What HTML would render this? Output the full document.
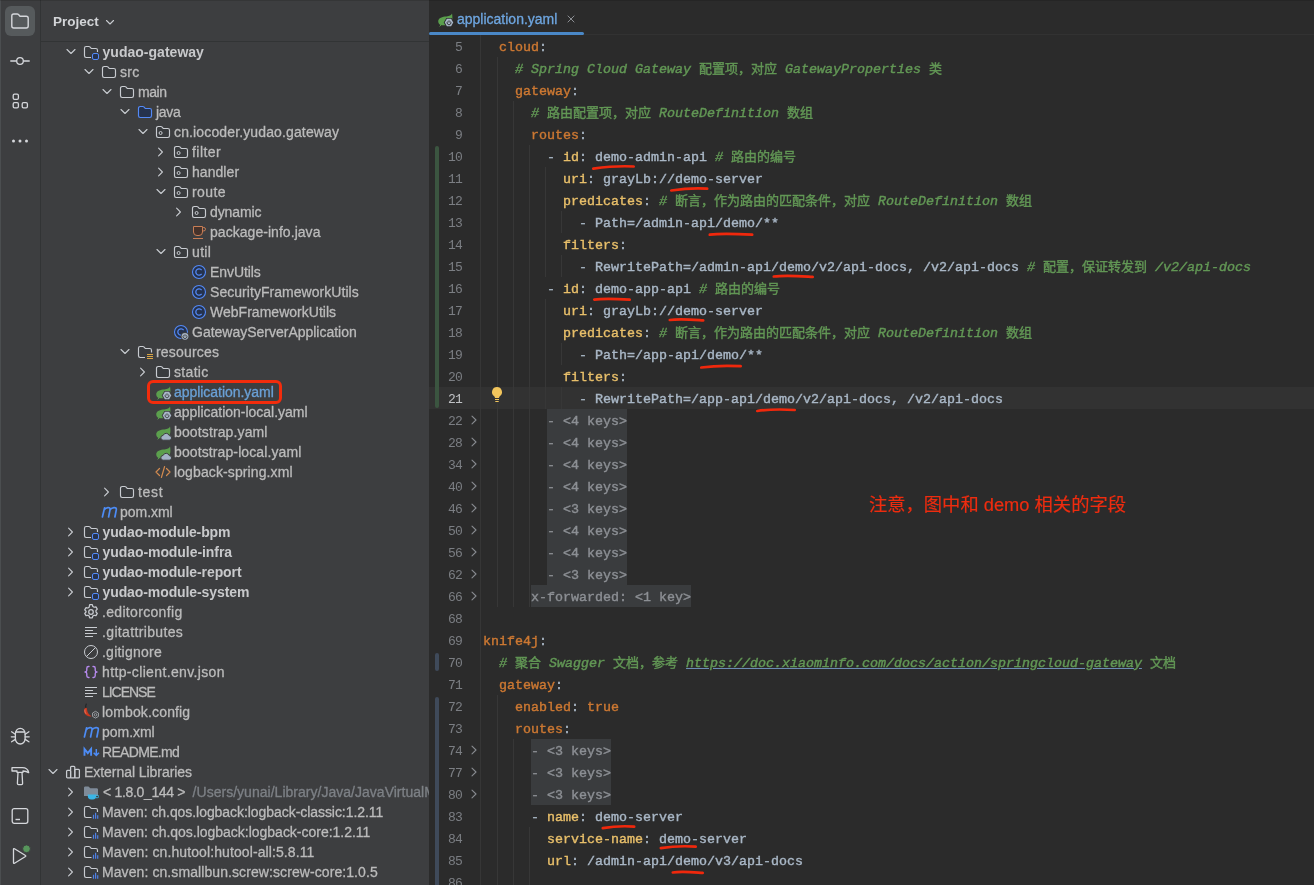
<!DOCTYPE html>
<html lang="zh"><head><meta charset="utf-8"><title>application.yaml</title>
<style>
*{box-sizing:border-box}
html,body{margin:0;padding:0;background:#2b2b2b;}
body{width:1314px;height:885px;overflow:hidden;position:relative;font-family:"Liberation Sans","Noto Sans CJK SC",sans-serif;}
.tb{position:absolute;left:0;top:0;width:41px;height:885px;background:#3d3e40;border-right:1px solid #323435;box-shadow:inset 1px 0 0 #4b4e50}
.tb svg{position:absolute}
.selbtn{position:absolute;left:5px;top:6px;width:30px;height:30px;border-radius:6px;background:#565a5c}
.proj{position:absolute;left:41px;top:0;width:388px;height:885px;background:#3d3e40;overflow:hidden}
.ph{position:absolute;left:0;top:0;width:388px;height:42px;border-bottom:1px solid #323435}
.ph b{position:absolute;left:12px;top:14px;font-size:13.500px;line-height:16px;color:#d3d5d8;font-weight:bold}
.tree{will-change:transform;position:absolute;left:-41px;top:0;width:470px;height:885px}
.row{position:absolute;left:0;height:20px;width:470px}
.row .a,.row .i{position:absolute;top:2px;width:16px;height:16px}
.row .a{top:1.500px}
.row svg{display:block}
.row .t{position:absolute;top:0;line-height:20px;font-size:14px;color:#bbbbbb;white-space:nowrap;-webkit-text-stroke:.3px}
.row .t.b{font-weight:bold;color:#c8c9cb;-webkit-text-stroke:0;margin-left:.5px}
.row .t.sel{color:#6aa0d6}
.row .g{color:#7d8186;white-space:pre}
.redbox{position:absolute;left:147px;top:380px;width:135px;height:24px;border:3px solid #f32c0c;border-radius:6px}
.sb1{position:absolute;left:428px;top:0;width:2px;height:885px;background:#343638}
.ed{will-change:transform;position:absolute;left:429px;top:0;width:885px;height:885px;background:#2b2b2b;overflow:hidden;font-family:"Liberation Mono","Noto Sans CJK SC",monospace}
.tabs{position:absolute;left:0;top:0;width:885px;height:35px;background:#2b2b2b;border-bottom:1px solid #323232}
.tab{position:absolute;left:0;top:0;width:155px;height:35px}
.tab:after{content:'';position:absolute;left:0;top:32px;width:155px;height:3px;border-radius:1.500px;background:#4a88c7}
.tab .nm{position:absolute;left:28px;top:9px;-webkit-text-stroke:.3px;font:14px/20px "Liberation Sans",sans-serif;color:#6ea6e0}
.ln{position:absolute;left:0;width:885px;height:22px;font-size:13.330px;line-height:22px;white-space:pre}
.curbg{position:absolute;left:0;top:387px;width:885px;height:22px;background:#323232}
.no{position:absolute;right:853px;top:1.500px;color:#7b7e83;font-size:13px;letter-spacing:-.9px;margin-right:-.9px}
.ln.cur .no{color:#c0c2c5}
.fa{position:absolute;left:40px;top:5px}
.code{position:absolute;top:1.500px;color:#a9b7c6;-webkit-text-stroke:.4px}
.k{color:#cc7832} .code .k{}
.yk{color:#e8bf6a}
.c{color:#629755;font-style:italic}
.u{color:#629755;font-style:italic;text-decoration:underline;text-decoration-color:#6c8cb5}
.p{color:#a9b7c6}
.f{color:#8c8f94}
.fb{position:absolute;top:0;height:22px;background:#3a3c3e}
.z{line-height:1px;font-size:13px;font-style:normal;font-family:"Noto Sans CJK SC",sans-serif}
.gd{position:absolute;width:1px;background:#373737}
.gutline{position:absolute;left:51px;top:35px;width:1px;height:850px;background:#363636}
.vcs{position:absolute;left:6px;width:4px;border-radius:2px}
.note{position:absolute;left:869px;top:493.500px;-webkit-text-stroke:.2px;font:18.300px/22px "Liberation Sans","Noto Sans CJK SC",sans-serif;color:#ee2c0f;white-space:nowrap}
</style></head><body>

<div class="tb">
 <div class="selbtn"></div>
 <svg style="left:10px;top:11px" width="20" height="20" viewBox="0 0 20 20" fill="none"><path d="M1.800 5c0-1.100.9-2 2-2h3.300c.5 0 1 .2 1.400.6L10 5.200h6.200c1.100 0 2 .9 2 2V15c0 1.100-.9 2-2 2H3.800c-1.100 0-2-.9-2-2z" stroke="#d5d7db" stroke-width="1.400"/></svg>
 <svg style="left:10px;top:51px" width="20" height="20" viewBox="0 0 20 20" fill="none"><circle cx="10" cy="10" r="3.300" stroke="#d5d7db" stroke-width="1.300"/><path d="M0.300 10H6.700M13.300 10h6.400" stroke="#d5d7db" stroke-width="1.300"/></svg>
 <svg style="left:10px;top:91px" width="20" height="20" viewBox="0 0 20 20" fill="none"><rect x="3.200" y="3.200" width="5.200" height="5.200" rx="1.300" stroke="#d5d7db" stroke-width="1.300"/><rect x="3.200" y="11.600" width="5.200" height="5.200" rx="1.300" stroke="#d5d7db" stroke-width="1.300"/><rect x="12.200" y="11.600" width="5.200" height="5.200" rx="1.300" stroke="#d5d7db" stroke-width="1.300"/></svg>
 <svg style="left:10px;top:131px" width="20" height="20" viewBox="0 0 20 20"><circle cx="3.500" cy="10" r="1.500" fill="#d5d7db"/><circle cx="10" cy="10" r="1.500" fill="#d5d7db"/><circle cx="16.500" cy="10" r="1.500" fill="#d5d7db"/></svg>

 <svg style="left:10px;top:726px" width="20" height="20" viewBox="0 0 20 20" fill="none"><path d="M5.400 7.600a4.850 5.200 0 0 1 9.700 0v5.200a4.850 5.200 0 0 1-9.700 0z" stroke="#d5d7db" stroke-width="1.300"/><path d="M6.200 6h8.100M5.300 8.200L1.600 5.800M15.200 8.200l3.700-2.400M5.300 10.800H1.300M15.200 10.800h4M5.300 13.400l-3.700 2.400M15.200 13.400l3.700 2.400" stroke="#d5d7db" stroke-width="1.300" stroke-linecap="round"/></svg>
 <svg style="left:10px;top:766px" width="20" height="20" viewBox="0 0 20 20" fill="none"><path d="M2 1.700h10.300c3.300 0 5.800 1.900 6.400 5-1.700-1.200-3.400-1.700-5.700-1.700v1.300H7V5H2z" stroke="#d5d7db" stroke-width="1.300" stroke-linejoin="round"/><path d="M8 6.300l-.6 11.200c0 .6.500 1.100 1.100 1.100h3c.6 0 1.100-.5 1.100-1.100L12 6.300" stroke="#d5d7db" stroke-width="1.300" stroke-linejoin="round"/></svg>
 <svg style="left:10px;top:806px" width="20" height="20" viewBox="0 0 20 20" fill="none"><rect x="2.200" y="2.700" width="15.600" height="14.600" rx="2" stroke="#d5d7db" stroke-width="1.300"/><path d="M5.500 13.500h4.500" stroke="#d5d7db" stroke-width="1.400"/></svg>
 <svg style="left:10px;top:845px" width="22" height="22" viewBox="0 0 22 22" fill="none"><path d="M3.500 4.200v13.600c0 .5.500.8 1 .5l11-6.800c.4-.3.400-.8 0-1L4.500 3.700c-.5-.3-1 0-1 .5z" stroke="#d5d7db" stroke-width="1.300" stroke-linejoin="round"/><circle cx="16.500" cy="3.800" r="3.900" fill="#57965c" stroke="#3d3e40" stroke-width="1"/></svg>
</div>
<div class="proj">
 <div class="tree">
<div class="row" style="top:42px"><span class="a" style="left:62.5px"><svg class="ch" width="16" height="16" viewBox="0 0 16 16" fill="none"><path d="M4 5.500L8 9.500l4-4" stroke="#c9ccd1" stroke-width="1.100" stroke-linecap="round" stroke-linejoin="round"/></svg></span><span class="i" style="left:83px"><svg class="ic" style="" width="16" height="16" viewBox="0 0 16 16" fill="none"><path d="M14.5 8V6.2c0-.94-.76-1.7-1.7-1.7H8.56c-.14 0-.26-.1-.36-.2L6.86 2.94A1.5 1.5 0 0 0 5.8 2.5H3.2c-.94 0-1.7.76-1.7 1.7v7.6c0 .94.76 1.7 1.7 1.7H8" fill="#393b3e" stroke="#c9ccd1" stroke-width="1.150"/><rect x="9.5" y="9.5" width="6" height="6" rx="1.5" fill="#25324d" stroke="#548af7"/></svg></span><span class="t b" id="t0" style="left:102px;letter-spacing:0.02px"><span class="m">yudao-gateway</span></span></div>
<div class="row" style="top:62px"><span class="a" style="left:80.5px"><svg class="ch" width="16" height="16" viewBox="0 0 16 16" fill="none"><path d="M4 5.500L8 9.500l4-4" stroke="#c9ccd1" stroke-width="1.100" stroke-linecap="round" stroke-linejoin="round"/></svg></span><span class="i" style="left:101px"><svg class="ic" style="" width="16" height="16" viewBox="0 0 16 16" fill="none"><path d="M1.5 4.2c0-.94.76-1.7 1.7-1.7h2.6c.4 0 .78.16 1.06.44L8.2 4.3c.1.1.22.2.36.2h4.24c.94 0 1.7.76 1.7 1.7v5.6c0 .94-.76 1.7-1.7 1.7H3.2c-.94 0-1.7-.76-1.7-1.7z" fill="#393b3e" stroke="#c9ccd1" stroke-width="1.150"/></svg></span><span class="t" id="t1" style="left:120px;letter-spacing:0.276px"><span class="m">src</span></span></div>
<div class="row" style="top:82px"><span class="a" style="left:98.5px"><svg class="ch" width="16" height="16" viewBox="0 0 16 16" fill="none"><path d="M4 5.500L8 9.500l4-4" stroke="#c9ccd1" stroke-width="1.100" stroke-linecap="round" stroke-linejoin="round"/></svg></span><span class="i" style="left:119px"><svg class="ic" style="" width="16" height="16" viewBox="0 0 16 16" fill="none"><path d="M1.5 4.2c0-.94.76-1.7 1.7-1.7h2.6c.4 0 .78.16 1.06.44L8.2 4.3c.1.1.22.2.36.2h4.24c.94 0 1.7.76 1.7 1.7v5.6c0 .94-.76 1.7-1.7 1.7H3.2c-.94 0-1.7-.76-1.7-1.7z" fill="#393b3e" stroke="#c9ccd1" stroke-width="1.150"/></svg></span><span class="t" id="t2" style="left:138px;letter-spacing:-0.44px"><span class="m">main</span></span></div>
<div class="row" style="top:102px"><span class="a" style="left:116.5px"><svg class="ch" width="16" height="16" viewBox="0 0 16 16" fill="none"><path d="M4 5.500L8 9.500l4-4" stroke="#c9ccd1" stroke-width="1.100" stroke-linecap="round" stroke-linejoin="round"/></svg></span><span class="i" style="left:137px"><svg class="ic" style="" width="16" height="16" viewBox="0 0 16 16" fill="none"><path d="M1.5 4.2c0-.94.76-1.7 1.7-1.7h2.6c.4 0 .78.16 1.06.44L8.2 4.3c.1.1.22.2.36.2h4.24c.94 0 1.7.76 1.7 1.7v5.6c0 .94-.76 1.7-1.7 1.7H3.2c-.94 0-1.7-.76-1.7-1.7z" fill="#25324d" stroke="#548af7" stroke-width="1.150"/></svg></span><span class="t" id="t3" style="left:156px;letter-spacing:-0.297px"><span class="m">java</span></span></div>
<div class="row" style="top:122px"><span class="a" style="left:134.5px"><svg class="ch" width="16" height="16" viewBox="0 0 16 16" fill="none"><path d="M4 5.500L8 9.500l4-4" stroke="#c9ccd1" stroke-width="1.100" stroke-linecap="round" stroke-linejoin="round"/></svg></span><span class="i" style="left:155px"><svg class="ic" style="" width="16" height="16" viewBox="0 0 16 16" fill="none"><path d="M1.5 4.2c0-.94.76-1.7 1.7-1.7h2.6c.4 0 .78.16 1.06.44L8.2 4.3c.1.1.22.2.36.2h4.24c.94 0 1.7.76 1.7 1.7v5.6c0 .94-.76 1.7-1.7 1.7H3.2c-.94 0-1.7-.76-1.7-1.7z" fill="#393b3e" stroke="#c9ccd1" stroke-width="1.150"/><circle cx="5.6" cy="9" r="1.5" stroke="#c9ccd1" stroke-width="1"/></svg></span><span class="t" id="t4" style="left:174px;letter-spacing:0.134px"><span class="m">cn.iocoder.yudao.gateway</span></span></div>
<div class="row" style="top:142px"><span class="a" style="left:152.5px"><svg class="ch" width="16" height="16" viewBox="0 0 16 16" fill="none"><path d="M5.600 4.200L9.400 8l-3.800 3.800" stroke="#c9ccd1" stroke-width="1.100" stroke-linecap="round" stroke-linejoin="round"/></svg></span><span class="i" style="left:173px"><svg class="ic" style="" width="16" height="16" viewBox="0 0 16 16" fill="none"><path d="M1.5 4.2c0-.94.76-1.7 1.7-1.7h2.6c.4 0 .78.16 1.06.44L8.2 4.3c.1.1.22.2.36.2h4.24c.94 0 1.7.76 1.7 1.7v5.6c0 .94-.76 1.7-1.7 1.7H3.2c-.94 0-1.7-.76-1.7-1.7z" fill="#393b3e" stroke="#c9ccd1" stroke-width="1.150"/><circle cx="5.6" cy="9" r="1.5" stroke="#c9ccd1" stroke-width="1"/></svg></span><span class="t" id="t5" style="left:192px;letter-spacing:0.458px"><span class="m">filter</span></span></div>
<div class="row" style="top:162px"><span class="a" style="left:152.5px"><svg class="ch" width="16" height="16" viewBox="0 0 16 16" fill="none"><path d="M5.600 4.200L9.400 8l-3.800 3.800" stroke="#c9ccd1" stroke-width="1.100" stroke-linecap="round" stroke-linejoin="round"/></svg></span><span class="i" style="left:173px"><svg class="ic" style="" width="16" height="16" viewBox="0 0 16 16" fill="none"><path d="M1.5 4.2c0-.94.76-1.7 1.7-1.7h2.6c.4 0 .78.16 1.06.44L8.2 4.3c.1.1.22.2.36.2h4.24c.94 0 1.7.76 1.7 1.7v5.6c0 .94-.76 1.7-1.7 1.7H3.2c-.94 0-1.7-.76-1.7-1.7z" fill="#393b3e" stroke="#c9ccd1" stroke-width="1.150"/><circle cx="5.6" cy="9" r="1.5" stroke="#c9ccd1" stroke-width="1"/></svg></span><span class="t" id="t6" style="left:192px;letter-spacing:0.057px"><span class="m">handler</span></span></div>
<div class="row" style="top:182px"><span class="a" style="left:152.5px"><svg class="ch" width="16" height="16" viewBox="0 0 16 16" fill="none"><path d="M4 5.500L8 9.500l4-4" stroke="#c9ccd1" stroke-width="1.100" stroke-linecap="round" stroke-linejoin="round"/></svg></span><span class="i" style="left:173px"><svg class="ic" style="" width="16" height="16" viewBox="0 0 16 16" fill="none"><path d="M1.5 4.2c0-.94.76-1.7 1.7-1.7h2.6c.4 0 .78.16 1.06.44L8.2 4.3c.1.1.22.2.36.2h4.24c.94 0 1.7.76 1.7 1.7v5.6c0 .94-.76 1.7-1.7 1.7H3.2c-.94 0-1.7-.76-1.7-1.7z" fill="#393b3e" stroke="#c9ccd1" stroke-width="1.150"/><circle cx="5.6" cy="9" r="1.5" stroke="#c9ccd1" stroke-width="1"/></svg></span><span class="t" id="t7" style="left:192px;letter-spacing:0.396px"><span class="m">route</span></span></div>
<div class="row" style="top:202px"><span class="a" style="left:170.5px"><svg class="ch" width="16" height="16" viewBox="0 0 16 16" fill="none"><path d="M5.600 4.200L9.400 8l-3.800 3.800" stroke="#c9ccd1" stroke-width="1.100" stroke-linecap="round" stroke-linejoin="round"/></svg></span><span class="i" style="left:191px"><svg class="ic" style="" width="16" height="16" viewBox="0 0 16 16" fill="none"><path d="M1.5 4.2c0-.94.76-1.7 1.7-1.7h2.6c.4 0 .78.16 1.06.44L8.2 4.3c.1.1.22.2.36.2h4.24c.94 0 1.7.76 1.7 1.7v5.6c0 .94-.76 1.7-1.7 1.7H3.2c-.94 0-1.7-.76-1.7-1.7z" fill="#393b3e" stroke="#c9ccd1" stroke-width="1.150"/><circle cx="5.6" cy="9" r="1.5" stroke="#c9ccd1" stroke-width="1"/></svg></span><span class="t" id="t8" style="left:210px;letter-spacing:-0.092px"><span class="m">dynamic</span></span></div>
<div class="row" style="top:222px"><span class="i" style="left:191px"><svg class="ic" style="" width="16" height="16" viewBox="0 0 16 16" fill="none"><path d="M2.5 2.5h9v5.5a3.5 3.5 0 0 1-3.5 3.5H6A3.5 3.5 0 0 1 2.500 8z" fill="#45322b" stroke="#c77d55"/><path d="M11.5 3.5h1.3a1.7 1.7 0 0 1 0 3.4h-1.3" stroke="#c77d55"/><path d="M2 14.500h10" stroke="#c77d55"/></svg></span><span class="t" id="t9" style="left:210px;letter-spacing:0.044px"><span class="m">package-info.java</span></span></div>
<div class="row" style="top:242px"><span class="a" style="left:152.5px"><svg class="ch" width="16" height="16" viewBox="0 0 16 16" fill="none"><path d="M4 5.500L8 9.500l4-4" stroke="#c9ccd1" stroke-width="1.100" stroke-linecap="round" stroke-linejoin="round"/></svg></span><span class="i" style="left:173px"><svg class="ic" style="" width="16" height="16" viewBox="0 0 16 16" fill="none"><path d="M1.5 4.2c0-.94.76-1.7 1.7-1.7h2.6c.4 0 .78.16 1.06.44L8.2 4.3c.1.1.22.2.36.2h4.24c.94 0 1.7.76 1.7 1.7v5.6c0 .94-.76 1.7-1.7 1.7H3.2c-.94 0-1.7-.76-1.7-1.7z" fill="#393b3e" stroke="#c9ccd1" stroke-width="1.150"/><circle cx="5.6" cy="9" r="1.5" stroke="#c9ccd1" stroke-width="1"/></svg></span><span class="t" id="t10" style="left:192px;letter-spacing:0.348px"><span class="m">util</span></span></div>
<div class="row" style="top:262px"><span class="i" style="left:191px"><svg class="ic" style="" width="16" height="16" viewBox="0 0 16 16" fill="none"><circle cx="8" cy="8" r="6.500" fill="#25324d" stroke="#548af7" stroke-width="1.100"/><path d="M10.600 6.100A3.200 3.200 0 1 0 10.600 9.900" stroke="#548af7" stroke-width="1.300"/></svg></span><span class="t" id="t11" style="left:210px;letter-spacing:-0.07px"><span class="m">EnvUtils</span></span></div>
<div class="row" style="top:282px"><span class="i" style="left:191px"><svg class="ic" style="" width="16" height="16" viewBox="0 0 16 16" fill="none"><circle cx="8" cy="8" r="6.500" fill="#25324d" stroke="#548af7" stroke-width="1.100"/><path d="M10.600 6.100A3.200 3.200 0 1 0 10.600 9.900" stroke="#548af7" stroke-width="1.300"/></svg></span><span class="t" id="t12" style="left:210px;letter-spacing:0.045px"><span class="m">SecurityFrameworkUtils</span></span></div>
<div class="row" style="top:302px"><span class="i" style="left:191px"><svg class="ic" style="" width="16" height="16" viewBox="0 0 16 16" fill="none"><circle cx="8" cy="8" r="6.500" fill="#25324d" stroke="#548af7" stroke-width="1.100"/><path d="M10.600 6.100A3.200 3.200 0 1 0 10.600 9.900" stroke="#548af7" stroke-width="1.300"/></svg></span><span class="t" id="t13" style="left:210px;letter-spacing:0.02px"><span class="m">WebFrameworkUtils</span></span></div>
<div class="row" style="top:322px"><span class="i" style="left:173px"><svg class="ic" style="overflow:visible" width="16" height="16" viewBox="0 0 16 16" fill="none"><circle cx="8" cy="8" r="6.500" fill="#25324d" stroke="#548af7" stroke-width="1.100"/><path d="M10.600 6.100A3.200 3.200 0 1 0 10.600 9.900" stroke="#548af7" stroke-width="1.300"/><circle cx="12" cy="12.300" r="4.300" fill="#3d3e40"/><circle cx="12" cy="12.300" r="3.400" fill="#a3b1c2"/><path d="M10.700 11.300a1.900 1.900 0 1 0 2.600 0M12 10.300v2" stroke="#3d3e40" stroke-width=".9" fill="none"/></svg></span><span class="t" id="t14" style="left:192px;letter-spacing:-0.008px"><span class="m">GatewayServerApplication</span></span></div>
<div class="row" style="top:342px"><span class="a" style="left:116.5px"><svg class="ch" width="16" height="16" viewBox="0 0 16 16" fill="none"><path d="M4 5.500L8 9.500l4-4" stroke="#c9ccd1" stroke-width="1.100" stroke-linecap="round" stroke-linejoin="round"/></svg></span><span class="i" style="left:137px"><svg class="ic" style="" width="16" height="16" viewBox="0 0 16 16" fill="none"><path d="M14.5 8.5V6.2c0-.94-.76-1.7-1.7-1.7H8.56c-.14 0-.26-.1-.36-.2L6.86 2.94A1.5 1.5 0 0 0 5.8 2.5H3.2c-.94 0-1.7.76-1.7 1.7v7.6c0 .94.76 1.7 1.7 1.7H8" fill="#393b3e" stroke="#c9ccd1" stroke-width="1.150"/><path d="M10 10.5h6M10 12.5h6M10 14.5h6" stroke="#d9a545" stroke-width="1.100"/></svg></span><span class="t" id="t15" style="left:156px;letter-spacing:0.181px"><span class="m">resources</span></span></div>
<div class="row" style="top:362px"><span class="a" style="left:134.5px"><svg class="ch" width="16" height="16" viewBox="0 0 16 16" fill="none"><path d="M5.600 4.200L9.400 8l-3.800 3.800" stroke="#c9ccd1" stroke-width="1.100" stroke-linecap="round" stroke-linejoin="round"/></svg></span><span class="i" style="left:155px"><svg class="ic" style="" width="16" height="16" viewBox="0 0 16 16" fill="none"><path d="M1.5 4.2c0-.94.76-1.7 1.7-1.7h2.6c.4 0 .78.16 1.06.44L8.2 4.3c.1.1.22.2.36.2h4.24c.94 0 1.7.76 1.7 1.7v5.6c0 .94-.76 1.7-1.7 1.7H3.2c-.94 0-1.7-.76-1.7-1.7z" fill="#393b3e" stroke="#c9ccd1" stroke-width="1.150"/></svg></span><span class="t" id="t16" style="left:174px;letter-spacing:0.319px"><span class="m">static</span></span></div>
<div class="row" style="top:382px"><span class="i" style="left:155px"><svg class="ic" style="overflow:visible" width="16" height="16" viewBox="0 0 16 16" fill="none"><path d="M15 2.600c-.8 1.800-2.500 2.600-5.500 2.800C5.500 5.600 1.200 6.800 1.200 10.200c0 2.400 1.800 4 4 4h5.800c2 0 4.400-3.200 4.400-7.200 0-2-.2-3.400-.4-4.400z" fill="#5b9f4d"/><path d="M2.700 15.400l2.700-2.800" stroke="#5b9f4d" stroke-width="1"/><path d="M17.300 11.500l-2.650 4.600h-5.300L6.700 11.500l2.650-4.600h5.300z" fill="#3d3e40"/><path d="M16.250 11.500l-2.130 3.680H9.880L7.750 11.500l2.130-3.680h4.240z" fill="#a9b7c9"/><path d="M10.700 10.500a1.900 1.900 0 1 0 2.600 0M12 9.400v2.100" stroke="#3d3e40" stroke-width=".9" fill="none"/></svg></span><span class="t sel" id="t17" style="left:174px;letter-spacing:-0.043px"><span class="m">application.yaml</span></span></div>
<div class="row" style="top:402px"><span class="i" style="left:155px"><svg class="ic" style="overflow:visible" width="16" height="16" viewBox="0 0 16 16" fill="none"><path d="M15 2.600c-.8 1.800-2.500 2.600-5.500 2.800C5.500 5.600 1.200 6.800 1.200 10.200c0 2.400 1.800 4 4 4h5.800c2 0 4.400-3.200 4.400-7.200 0-2-.2-3.400-.4-4.400z" fill="#5b9f4d"/><path d="M2.700 15.400l2.700-2.800" stroke="#5b9f4d" stroke-width="1"/><path d="M17.300 11.500l-2.650 4.600h-5.300L6.700 11.500l2.650-4.600h5.300z" fill="#3d3e40"/><path d="M16.250 11.500l-2.130 3.680H9.880L7.750 11.500l2.130-3.680h4.240z" fill="#a9b7c9"/><path d="M10.700 10.500a1.900 1.900 0 1 0 2.600 0M12 9.400v2.100" stroke="#3d3e40" stroke-width=".9" fill="none"/></svg></span><span class="t" id="t18" style="left:174px;letter-spacing:-0.011px"><span class="m">application-local.yaml</span></span></div>
<div class="row" style="top:422px"><span class="i" style="left:155px"><svg class="ic" style="overflow:visible" width="16" height="16" viewBox="0 0 16 16" fill="none"><path d="M15 2.600c-.8 1.800-2.500 2.600-5.500 2.800C5.500 5.600 1.200 6.800 1.200 10.200c0 2.400 1.800 4 4 4h5.800c2 0 4.400-3.200 4.400-7.200 0-2-.2-3.400-.4-4.400z" fill="#5b9f4d"/><path d="M2.700 15.400l2.700-2.800" stroke="#5b9f4d" stroke-width="1"/><path d="M8.300 16.200a2.400 2.400 0 0 1-.2-4.800 3.300 3.300 0 0 1 6.200.2 2.300 2.300 0 0 1-.1 4.600z" fill="#a3b3c7" stroke="#3d3e40" stroke-width="1"/></svg></span><span class="t" id="t19" style="left:174px;letter-spacing:0.127px"><span class="m">bootstrap.yaml</span></span></div>
<div class="row" style="top:442px"><span class="i" style="left:155px"><svg class="ic" style="overflow:visible" width="16" height="16" viewBox="0 0 16 16" fill="none"><path d="M15 2.600c-.8 1.800-2.500 2.600-5.500 2.800C5.500 5.600 1.200 6.800 1.200 10.200c0 2.400 1.800 4 4 4h5.800c2 0 4.400-3.200 4.400-7.200 0-2-.2-3.400-.4-4.400z" fill="#5b9f4d"/><path d="M2.700 15.400l2.700-2.800" stroke="#5b9f4d" stroke-width="1"/><path d="M8.300 16.200a2.400 2.400 0 0 1-.2-4.800 3.300 3.300 0 0 1 6.200.2 2.300 2.300 0 0 1-.1 4.600z" fill="#a3b3c7" stroke="#3d3e40" stroke-width="1"/></svg></span><span class="t" id="t20" style="left:174px;letter-spacing:0.111px"><span class="m">bootstrap-local.yaml</span></span></div>
<div class="row" style="top:462px"><span class="i" style="left:155px"><svg class="ic" style="" width="16" height="16" viewBox="0 0 16 16" fill="none"><path d="M4.500 4.500L1 8l3.500 3.500M11.500 4.500L15 8l-3.500 3.500M9.600 2.500l-3.200 11" stroke="#d28a4f" stroke-width="1.200" stroke-linecap="round" stroke-linejoin="round"/></svg></span><span class="t" id="t21" style="left:174px;letter-spacing:0.11px"><span class="m">logback-spring.xml</span></span></div>
<div class="row" style="top:482px"><span class="a" style="left:98.5px"><svg class="ch" width="16" height="16" viewBox="0 0 16 16" fill="none"><path d="M5.600 4.200L9.400 8l-3.800 3.800" stroke="#c9ccd1" stroke-width="1.100" stroke-linecap="round" stroke-linejoin="round"/></svg></span><span class="i" style="left:119px"><svg class="ic" style="" width="16" height="16" viewBox="0 0 16 16" fill="none"><path d="M1.5 4.2c0-.94.76-1.7 1.7-1.7h2.6c.4 0 .78.16 1.06.44L8.2 4.3c.1.1.22.2.36.2h4.24c.94 0 1.7.76 1.7 1.7v5.6c0 .94-.76 1.7-1.7 1.7H3.2c-.94 0-1.7-.76-1.7-1.7z" fill="#393b3e" stroke="#c9ccd1" stroke-width="1.150"/></svg></span><span class="t" id="t22" style="left:138px;letter-spacing:0.655px"><span class="m">test</span></span></div>
<div class="row" style="top:502px"><span class="i" style="left:101px"><svg class="ic" style="overflow:visible" width="16" height="16" viewBox="0 0 16 16" fill="none"><path d="M1.4 13L3.6 3.8M3.1 6C4.6 3.3 9.6 2.3 9 5.8L7.6 13M8.9 6C10.4 3.3 16 2.300 15.3 5.800L13.900 13" stroke="#4d8cf5" stroke-width="1.700" stroke-linecap="round" stroke-linejoin="round" fill="none"/></svg></span><span class="t" id="t23" style="left:120px;letter-spacing:-0.029px"><span class="m">pom.xml</span></span></div>
<div class="row" style="top:522px"><span class="a" style="left:62.5px"><svg class="ch" width="16" height="16" viewBox="0 0 16 16" fill="none"><path d="M5.600 4.200L9.400 8l-3.800 3.800" stroke="#c9ccd1" stroke-width="1.100" stroke-linecap="round" stroke-linejoin="round"/></svg></span><span class="i" style="left:83px"><svg class="ic" style="" width="16" height="16" viewBox="0 0 16 16" fill="none"><path d="M14.5 8V6.2c0-.94-.76-1.7-1.7-1.7H8.56c-.14 0-.26-.1-.36-.2L6.86 2.94A1.5 1.5 0 0 0 5.8 2.5H3.2c-.94 0-1.7.76-1.7 1.7v7.6c0 .94.76 1.7 1.7 1.7H8" fill="#393b3e" stroke="#c9ccd1" stroke-width="1.150"/><rect x="9.5" y="9.5" width="6" height="6" rx="1.5" fill="#25324d" stroke="#548af7"/></svg></span><span class="t b" id="t24" style="left:102px;letter-spacing:-0.131px"><span class="m">yudao-module-bpm</span></span></div>
<div class="row" style="top:542px"><span class="a" style="left:62.5px"><svg class="ch" width="16" height="16" viewBox="0 0 16 16" fill="none"><path d="M5.600 4.200L9.400 8l-3.800 3.800" stroke="#c9ccd1" stroke-width="1.100" stroke-linecap="round" stroke-linejoin="round"/></svg></span><span class="i" style="left:83px"><svg class="ic" style="" width="16" height="16" viewBox="0 0 16 16" fill="none"><path d="M14.5 8V6.2c0-.94-.76-1.7-1.7-1.7H8.56c-.14 0-.26-.1-.36-.2L6.86 2.94A1.5 1.5 0 0 0 5.8 2.5H3.2c-.94 0-1.7.76-1.7 1.7v7.6c0 .94.76 1.7 1.7 1.7H8" fill="#393b3e" stroke="#c9ccd1" stroke-width="1.150"/><rect x="9.5" y="9.5" width="6" height="6" rx="1.5" fill="#25324d" stroke="#548af7"/></svg></span><span class="t b" id="t25" style="left:102px;letter-spacing:-0.065px"><span class="m">yudao-module-infra</span></span></div>
<div class="row" style="top:562px"><span class="a" style="left:62.5px"><svg class="ch" width="16" height="16" viewBox="0 0 16 16" fill="none"><path d="M5.600 4.200L9.400 8l-3.800 3.800" stroke="#c9ccd1" stroke-width="1.100" stroke-linecap="round" stroke-linejoin="round"/></svg></span><span class="i" style="left:83px"><svg class="ic" style="" width="16" height="16" viewBox="0 0 16 16" fill="none"><path d="M14.5 8V6.2c0-.94-.76-1.7-1.7-1.7H8.56c-.14 0-.26-.1-.36-.2L6.86 2.94A1.5 1.5 0 0 0 5.8 2.5H3.2c-.94 0-1.7.76-1.7 1.7v7.6c0 .94.76 1.7 1.7 1.7H8" fill="#393b3e" stroke="#c9ccd1" stroke-width="1.150"/><rect x="9.5" y="9.5" width="6" height="6" rx="1.5" fill="#25324d" stroke="#548af7"/></svg></span><span class="t b" id="t26" style="left:102px;letter-spacing:-0.094px"><span class="m">yudao-module-report</span></span></div>
<div class="row" style="top:582px"><span class="a" style="left:62.5px"><svg class="ch" width="16" height="16" viewBox="0 0 16 16" fill="none"><path d="M5.600 4.200L9.400 8l-3.800 3.800" stroke="#c9ccd1" stroke-width="1.100" stroke-linecap="round" stroke-linejoin="round"/></svg></span><span class="i" style="left:83px"><svg class="ic" style="" width="16" height="16" viewBox="0 0 16 16" fill="none"><path d="M14.5 8V6.2c0-.94-.76-1.7-1.7-1.7H8.56c-.14 0-.26-.1-.36-.2L6.86 2.94A1.5 1.5 0 0 0 5.8 2.5H3.2c-.94 0-1.7.76-1.7 1.7v7.6c0 .94.76 1.7 1.7 1.7H8" fill="#393b3e" stroke="#c9ccd1" stroke-width="1.150"/><rect x="9.5" y="9.5" width="6" height="6" rx="1.5" fill="#25324d" stroke="#548af7"/></svg></span><span class="t b" id="t27" style="left:102px;letter-spacing:-0.094px"><span class="m">yudao-module-system</span></span></div>
<div class="row" style="top:602px"><span class="i" style="left:83px"><svg class="ic" style="overflow:visible" width="16" height="16" viewBox="0 0 16 16" fill="none"><g transform="translate(8 8) scale(1.08) translate(-8 -8.300)"><path d="M6.800 1.500h2.400l.5 1.700 1.200.7 1.700-.4 1.200 2.100-1.200 1.300v1.400l1.200 1.300-1.200 2.100-1.700-.4-1.200.7-.5 1.700H6.800l-.5-1.700-1.200-.7-1.700.4-1.200-2.100 1.200-1.300V7.600L2.200 6.300l1.200-2.100 1.700.4 1.200-.7z" stroke="#c9ccd1" stroke-width="1.150" stroke-linejoin="round"/><circle cx="8" cy="8.300" r="2.100" stroke="#c9ccd1" stroke-width="1.150"/></g></svg></span><span class="t" id="t28" style="left:102px;letter-spacing:0.325px"><span class="m">.editorconfig</span></span></div>
<div class="row" style="top:622px"><span class="i" style="left:83px"><svg class="ic" style="" width="16" height="16" viewBox="0 0 16 16" fill="none"><path d="M2 3.500h12M2 6.500h8M2 9.500h12M2 12.500h8" stroke="#c9ccd1" stroke-width="1.100"/></svg></span><span class="t" id="t29" style="left:102px;letter-spacing:0.352px"><span class="m">.gitattributes</span></span></div>
<div class="row" style="top:642px"><span class="i" style="left:83px"><svg class="ic" style="" width="16" height="16" viewBox="0 0 16 16" fill="none"><circle cx="8" cy="8" r="6.500" stroke="#c9ccd1"/><path d="M3.500 12.500l9-9" stroke="#c9ccd1"/></svg></span><span class="t" id="t30" style="left:102px;letter-spacing:0.231px"><span class="m">.gitignore</span></span></div>
<div class="row" style="top:662px"><span class="i" style="left:83px"><svg class="ic" style="" width="16" height="16" viewBox="0 0 16 16" fill="none"><path d="M6 2.500h-.5A1.700 1.700 0 0 0 3.800 4.200v2.100c0 .9-.7 1.700-1.800 1.700 1.100 0 1.800.8 1.800 1.700v2.100A1.700 1.700 0 0 0 5.500 13.500H6M10 2.500h.5a1.700 1.700 0 0 1 1.700 1.700v2.100c0 .9.700 1.700 1.800 1.700-1.100 0-1.800.8-1.800 1.700v2.100a1.700 1.700 0 0 1-1.700 1.700H10" stroke="#b589ec" stroke-width="1.400" stroke-linecap="round" stroke-linejoin="round"/></svg></span><span class="t" id="t31" style="left:102px;letter-spacing:0.36px"><span class="m">http-client.env.json</span></span></div>
<div class="row" style="top:682px"><span class="i" style="left:83px"><svg class="ic" style="" width="16" height="16" viewBox="0 0 16 16" fill="none"><path d="M2 3.500h12M2 6.500h8M2 9.500h12M2 12.500h8" stroke="#c9ccd1" stroke-width="1.100"/></svg></span><span class="t" id="t32" style="left:102px;letter-spacing:-1.032px"><span class="m">LICENSE</span></span></div>
<div class="row" style="top:702px"><span class="i" style="left:83px"><svg class="ic" style="overflow:visible" width="16" height="16" viewBox="0 0 16 16" fill="none"><path d="M2.200 3.800C.2 6 1 9.600 3.400 11.200c1.700 1.100 3.600 1.500 5.200 1.200C6.600 11 5.100 9.500 4.400 7.500 4 6.200 4.100 4.800 3.700 3.800z" fill="#c9391f"/><path d="M2 5.500c-.3 1.500 0 3 1 4.200" stroke="#e9826a" stroke-width=".9" fill="none"/><path d="M3.500 -.3C2.700 1 2.500 2.500 2.900 3.900" stroke="#26282a" stroke-width="1.300" fill="none"/><path d="M12.500 7.300l2.950 1.700v3.400l-2.950 1.700-2.950-1.700V9z" stroke="#a4a8ae" stroke-width=".9" fill="none"/><path d="M12.500 9.300l1.200.7v1.400l-1.200.7-1.200-.7V10z" stroke="#a4a8ae" stroke-width=".8" fill="none"/></svg></span><span class="t" id="t33" style="left:102px;letter-spacing:0.147px"><span class="m">lombok.config</span></span></div>
<div class="row" style="top:722px"><span class="i" style="left:83px"><svg class="ic" style="overflow:visible" width="16" height="16" viewBox="0 0 16 16" fill="none"><path d="M1.4 13L3.6 3.8M3.1 6C4.6 3.3 9.6 2.3 9 5.8L7.6 13M8.9 6C10.4 3.3 16 2.300 15.3 5.800L13.900 13" stroke="#4d8cf5" stroke-width="1.700" stroke-linecap="round" stroke-linejoin="round" fill="none"/></svg></span><span class="t" id="t34" style="left:102px;letter-spacing:-0.029px"><span class="m">pom.xml</span></span></div>
<div class="row" style="top:742px"><span class="i" style="left:83px"><svg class="ic" style="overflow:visible" width="16" height="16" viewBox="0 0 16 16" fill="none"><path d="M1.500 11.800V5l3.300 4.200L8.100 5v6.800" stroke="#4d8cf5" stroke-width="1.900" fill="none" stroke-linejoin="miter"/><path d="M13.300 4.900v6.200M10.700 8.700l2.600 2.800 2.600-2.800" stroke="#4d8cf5" stroke-width="1.500" fill="none"/></svg></span><span class="t" id="t35" style="left:102px;letter-spacing:-0.682px"><span class="m">README.md</span></span></div>
<div class="row" style="top:762px"><span class="a" style="left:44.5px"><svg class="ch" width="16" height="16" viewBox="0 0 16 16" fill="none"><path d="M4 5.500L8 9.500l4-4" stroke="#c9ccd1" stroke-width="1.100" stroke-linecap="round" stroke-linejoin="round"/></svg></span><span class="i" style="left:65px"><svg class="ic" style="" width="16" height="16" viewBox="0 0 16 16" fill="none"><rect x="1.600" y="6.300" width="4" height="7.500" rx=".9" stroke="#c9ccd1" stroke-width="1.250"/><rect x="5.600" y="2.300" width="4.200" height="11.500" rx=".9" stroke="#c9ccd1" stroke-width="1.250"/><rect x="9.800" y="5.300" width="4.600" height="8.500" rx=".9" stroke="#c9ccd1" stroke-width="1.250"/></svg></span><span class="t" id="t36" style="left:84px;letter-spacing:-0.052px"><span class="m">External Libraries</span></span></div>
<div class="row" style="top:782px"><span class="a" style="left:62.5px"><svg class="ch" width="16" height="16" viewBox="0 0 16 16" fill="none"><path d="M5.600 4.200L9.400 8l-3.800 3.800" stroke="#c9ccd1" stroke-width="1.100" stroke-linecap="round" stroke-linejoin="round"/></svg></span><span class="i" style="left:83px"><svg class="ic" style="" width="16" height="16" viewBox="0 0 16 16" fill="none"><path d="M1 3.8c0-.7.6-1.3 1.3-1.3h3.2l1.8 1.7h6.4c.7 0 1.3.6 1.3 1.3V12H1z" fill="#7f8b99"/><path d="M4.8 10.600h8.400v1.400a3.400 3.400 0 0 1-3.400 3.400H8.200a3.400 3.400 0 0 1-3.400-3.400z" fill="#3bb5e6"/><path d="M13.200 11.300h1.300a1.200 1.200 0 0 1 0 2.400h-1.700" stroke="#3bb5e6" stroke-width="1"/></svg></span><span class="t" id="t37" style="left:103px;letter-spacing:-0.325px"><span class="m">&lt; 1.8.0_144 &gt;</span><span class="g" style="letter-spacing:.02px;margin-left:3.500px"> /Users/yunai/Library/Java/JavaVirtualMachines</span></span></div>
<div class="row" style="top:802px"><span class="a" style="left:62.5px"><svg class="ch" width="16" height="16" viewBox="0 0 16 16" fill="none"><path d="M5.600 4.200L9.400 8l-3.800 3.800" stroke="#c9ccd1" stroke-width="1.100" stroke-linecap="round" stroke-linejoin="round"/></svg></span><span class="i" style="left:83px"><svg class="ic" style="" width="16" height="16" viewBox="0 0 16 16" fill="none"><path d="M14.5 8V6.2c0-.94-.76-1.7-1.7-1.7H8.56c-.14 0-.26-.1-.36-.2L6.86 2.94A1.5 1.5 0 0 0 5.8 2.5H3.2c-.94 0-1.7.76-1.7 1.7v7.6c0 .94.76 1.7 1.7 1.7H8.5" fill="#393b3e" stroke="#c9ccd1" stroke-width="1.150"/><path d="M10.5 10.8v3.900M12.600 8.800v5.900M14.700 11.300v3.400" stroke="#4d7fe6" stroke-width="1.200"/></svg></span><span class="t" id="t38" style="left:102px;letter-spacing:-0.059px"><span class="m">Maven: ch.qos.logback:logback-classic:1.2.11</span></span></div>
<div class="row" style="top:822px"><span class="a" style="left:62.5px"><svg class="ch" width="16" height="16" viewBox="0 0 16 16" fill="none"><path d="M5.600 4.200L9.400 8l-3.800 3.800" stroke="#c9ccd1" stroke-width="1.100" stroke-linecap="round" stroke-linejoin="round"/></svg></span><span class="i" style="left:83px"><svg class="ic" style="" width="16" height="16" viewBox="0 0 16 16" fill="none"><path d="M14.5 8V6.2c0-.94-.76-1.7-1.7-1.7H8.56c-.14 0-.26-.1-.36-.2L6.86 2.94A1.5 1.5 0 0 0 5.8 2.5H3.2c-.94 0-1.7.76-1.7 1.7v7.6c0 .94.76 1.7 1.7 1.7H8.5" fill="#393b3e" stroke="#c9ccd1" stroke-width="1.150"/><path d="M10.5 10.8v3.900M12.600 8.800v5.900M14.700 11.300v3.400" stroke="#4d7fe6" stroke-width="1.200"/></svg></span><span class="t" id="t39" style="left:102px;letter-spacing:-0.017px"><span class="m">Maven: ch.qos.logback:logback-core:1.2.11</span></span></div>
<div class="row" style="top:842px"><span class="a" style="left:62.5px"><svg class="ch" width="16" height="16" viewBox="0 0 16 16" fill="none"><path d="M5.600 4.200L9.400 8l-3.800 3.800" stroke="#c9ccd1" stroke-width="1.100" stroke-linecap="round" stroke-linejoin="round"/></svg></span><span class="i" style="left:83px"><svg class="ic" style="" width="16" height="16" viewBox="0 0 16 16" fill="none"><path d="M14.5 8V6.2c0-.94-.76-1.7-1.7-1.7H8.56c-.14 0-.26-.1-.36-.2L6.86 2.94A1.5 1.5 0 0 0 5.8 2.5H3.2c-.94 0-1.7.76-1.7 1.7v7.6c0 .94.76 1.7 1.7 1.7H8.5" fill="#393b3e" stroke="#c9ccd1" stroke-width="1.150"/><path d="M10.5 10.8v3.900M12.600 8.800v5.900M14.700 11.300v3.400" stroke="#4d7fe6" stroke-width="1.200"/></svg></span><span class="t" id="t40" style="left:102px;letter-spacing:0.097px"><span class="m">Maven: cn.hutool:hutool-all:5.8.11</span></span></div>
<div class="row" style="top:862px"><span class="a" style="left:62.5px"><svg class="ch" width="16" height="16" viewBox="0 0 16 16" fill="none"><path d="M5.600 4.200L9.400 8l-3.800 3.800" stroke="#c9ccd1" stroke-width="1.100" stroke-linecap="round" stroke-linejoin="round"/></svg></span><span class="i" style="left:83px"><svg class="ic" style="" width="16" height="16" viewBox="0 0 16 16" fill="none"><path d="M14.5 8V6.2c0-.94-.76-1.7-1.7-1.7H8.56c-.14 0-.26-.1-.36-.2L6.86 2.94A1.5 1.5 0 0 0 5.8 2.5H3.2c-.94 0-1.7.76-1.7 1.7v7.6c0 .94.76 1.7 1.7 1.7H8.5" fill="#393b3e" stroke="#c9ccd1" stroke-width="1.150"/><path d="M10.5 10.8v3.900M12.600 8.800v5.900M14.700 11.300v3.400" stroke="#4d7fe6" stroke-width="1.200"/></svg></span><span class="t" id="t41" style="left:102px;letter-spacing:0.085px"><span class="m">Maven: cn.smallbun.screw:screw-core:1.0.5</span></span></div>
 <div class="redbox"></div>
 </div>
 <div class="ph"><b>Project</b><svg style="position:absolute;left:62px;top:15px" width="14" height="14" viewBox="0 0 14 14" fill="none"><path d="M3.500 5.500L7 9l3.500-3.500" stroke="#c9ccd1" stroke-width="1.100" stroke-linecap="round" stroke-linejoin="round"/></svg></div>
</div>
<div class="ed">
 <div class="curbg"></div>
 <div class="gd" style="left:68px;top:57px;height:550px"></div><div class="gd" style="left:84px;top:101px;height:506px"></div><div class="gd" style="left:100px;top:145px;height:462px"></div><div class="gd" style="left:116px;top:167px;height:110px"></div><div class="gd" style="left:116px;top:299px;height:110px"></div><div class="gd" style="left:132px;top:211px;height:22px"></div><div class="gd" style="left:132px;top:255px;height:22px"></div><div class="gd" style="left:132px;top:343px;height:22px"></div><div class="gd" style="left:132px;top:387px;height:22px"></div><div class="gd" style="left:68px;top:695px;height:198px"></div><div class="gd" style="left:84px;top:739px;height:154px"></div><div class="gd" style="left:100px;top:827px;height:66px"></div>
 <div class="gutline"></div>
 <div class="vcs" style="top:146px;height:262px;background:#3b5540"></div>
 <div class="vcs" style="top:652.500px;height:18.500px;background:#3f4a5a"></div>
 <div class="vcs" style="top:696.500px;height:195px;background:#3f4a5a"></div>
<div class="ln" style="top:35px"><span class="no">5</span><span class="code" style="left:70px"><span class="k">cloud</span><span class="p">:</span></span></div>
<div class="ln" style="top:57px"><span class="no">6</span><span class="code" style="left:86px"><span class="c"># Spring Cloud Gateway <span class="z">配置项，对应</span> GatewayProperties <span class="z">类</span></span></span></div>
<div class="ln" style="top:79px"><span class="no">7</span><span class="code" style="left:86px"><span class="k">gateway</span><span class="p">:</span></span></div>
<div class="ln" style="top:101px"><span class="no">8</span><span class="code" style="left:102px"><span class="c"># <span class="z">路由配置项，对应</span> RouteDefinition <span class="z">数组</span></span></span></div>
<div class="ln" style="top:123px"><span class="no">9</span><span class="code" style="left:102px"><span class="k">routes</span><span class="p">:</span></span></div>
<div class="ln" style="top:145px"><span class="no">10</span><span class="code" style="left:118px"><span class="p">- </span><span class="yk">id</span><span class="p">: demo-admin-api </span><span class="c"># <span class="z">路由的编号</span></span></span></div>
<div class="ln" style="top:167px"><span class="no">11</span><span class="code" style="left:134px"><span class="yk">uri</span><span class="p">: grayLb://demo-server</span></span></div>
<div class="ln" style="top:189px"><span class="no">12</span><span class="code" style="left:134px"><span class="yk">predicates</span><span class="p">: </span><span class="c"># <span class="z">断言，作为路由的匹配条件，对应</span> RouteDefinition <span class="z">数组</span></span></span></div>
<div class="ln" style="top:211px"><span class="no">13</span><span class="code" style="left:150px"><span class="p">- Path=/admin-api/demo/**</span></span></div>
<div class="ln" style="top:233px"><span class="no">14</span><span class="code" style="left:134px"><span class="yk">filters</span><span class="p">:</span></span></div>
<div class="ln" style="top:255px"><span class="no">15</span><span class="code" style="left:150px"><span class="p">- RewritePath=/admin-api/demo/v2/api-docs, /v2/api-docs </span><span class="c"># <span class="z">配置，保证转发到</span> /v2/api-docs</span></span></div>
<div class="ln" style="top:277px"><span class="no">16</span><span class="code" style="left:118px"><span class="p">- </span><span class="yk">id</span><span class="p">: demo-app-api </span><span class="c"># <span class="z">路由的编号</span></span></span></div>
<div class="ln" style="top:299px"><span class="no">17</span><span class="code" style="left:134px"><span class="yk">uri</span><span class="p">: grayLb://demo-server</span></span></div>
<div class="ln" style="top:321px"><span class="no">18</span><span class="code" style="left:134px"><span class="yk">predicates</span><span class="p">: </span><span class="c"># <span class="z">断言，作为路由的匹配条件，对应</span> RouteDefinition <span class="z">数组</span></span></span></div>
<div class="ln" style="top:343px"><span class="no">19</span><span class="code" style="left:150px"><span class="p">- Path=/app-api/demo/**</span></span></div>
<div class="ln" style="top:365px"><span class="no">20</span><span class="code" style="left:134px"><span class="yk">filters</span><span class="p">:</span></span></div>
<div class="ln cur" style="top:387px"><span class="no">21</span><span class="code" style="left:150px"><span class="p">- RewritePath=/app-api/demo/v2/api-docs, /v2/api-docs</span></span></div>
<div class="ln" style="top:409px"><span class="no">22</span><svg class="fa" width="10" height="12" viewBox="0 0 10 12" fill="none"><path d="M3 2.200L7 6 3 9.800" stroke="#888b90" stroke-width="1.100" stroke-linecap="round" stroke-linejoin="round"/></svg><span class="fb" style="left:118px;width:80px"></span><span class="code" style="left:118px"><span class="f">- &lt;4 keys&gt;</span></span></div>
<div class="ln" style="top:431px"><span class="no">28</span><svg class="fa" width="10" height="12" viewBox="0 0 10 12" fill="none"><path d="M3 2.200L7 6 3 9.800" stroke="#888b90" stroke-width="1.100" stroke-linecap="round" stroke-linejoin="round"/></svg><span class="fb" style="left:118px;width:80px"></span><span class="code" style="left:118px"><span class="f">- &lt;4 keys&gt;</span></span></div>
<div class="ln" style="top:453px"><span class="no">34</span><svg class="fa" width="10" height="12" viewBox="0 0 10 12" fill="none"><path d="M3 2.200L7 6 3 9.800" stroke="#888b90" stroke-width="1.100" stroke-linecap="round" stroke-linejoin="round"/></svg><span class="fb" style="left:118px;width:80px"></span><span class="code" style="left:118px"><span class="f">- &lt;4 keys&gt;</span></span></div>
<div class="ln" style="top:475px"><span class="no">40</span><svg class="fa" width="10" height="12" viewBox="0 0 10 12" fill="none"><path d="M3 2.200L7 6 3 9.800" stroke="#888b90" stroke-width="1.100" stroke-linecap="round" stroke-linejoin="round"/></svg><span class="fb" style="left:118px;width:80px"></span><span class="code" style="left:118px"><span class="f">- &lt;4 keys&gt;</span></span></div>
<div class="ln" style="top:497px"><span class="no">46</span><svg class="fa" width="10" height="12" viewBox="0 0 10 12" fill="none"><path d="M3 2.200L7 6 3 9.800" stroke="#888b90" stroke-width="1.100" stroke-linecap="round" stroke-linejoin="round"/></svg><span class="fb" style="left:118px;width:80px"></span><span class="code" style="left:118px"><span class="f">- &lt;3 keys&gt;</span></span></div>
<div class="ln" style="top:519px"><span class="no">50</span><svg class="fa" width="10" height="12" viewBox="0 0 10 12" fill="none"><path d="M3 2.200L7 6 3 9.800" stroke="#888b90" stroke-width="1.100" stroke-linecap="round" stroke-linejoin="round"/></svg><span class="fb" style="left:118px;width:80px"></span><span class="code" style="left:118px"><span class="f">- &lt;4 keys&gt;</span></span></div>
<div class="ln" style="top:541px"><span class="no">56</span><svg class="fa" width="10" height="12" viewBox="0 0 10 12" fill="none"><path d="M3 2.200L7 6 3 9.800" stroke="#888b90" stroke-width="1.100" stroke-linecap="round" stroke-linejoin="round"/></svg><span class="fb" style="left:118px;width:80px"></span><span class="code" style="left:118px"><span class="f">- &lt;4 keys&gt;</span></span></div>
<div class="ln" style="top:563px"><span class="no">62</span><svg class="fa" width="10" height="12" viewBox="0 0 10 12" fill="none"><path d="M3 2.200L7 6 3 9.800" stroke="#888b90" stroke-width="1.100" stroke-linecap="round" stroke-linejoin="round"/></svg><span class="fb" style="left:118px;width:80px"></span><span class="code" style="left:118px"><span class="f">- &lt;3 keys&gt;</span></span></div>
<div class="ln" style="top:585px"><span class="no">66</span><svg class="fa" width="10" height="12" viewBox="0 0 10 12" fill="none"><path d="M3 2.200L7 6 3 9.800" stroke="#888b90" stroke-width="1.100" stroke-linecap="round" stroke-linejoin="round"/></svg><span class="fb" style="left:102px;width:160px"></span><span class="code" style="left:102px"><span class="f">x-forwarded: &lt;1 key&gt;</span></span></div>
<div class="ln" style="top:607px"><span class="no">68</span><span class="code" style="left:54px"></span></div>
<div class="ln" style="top:629px"><span class="no">69</span><span class="code" style="left:54px"><span class="k">knife4j</span><span class="p">:</span></span></div>
<div class="ln" style="top:651px"><span class="no">70</span><span class="code" style="left:70px"><span class="c"># <span class="z">聚合</span> Swagger <span class="z">文档，参考</span> </span><span class="u">https://doc.xiaominfo.com/docs/action/springcloud-gateway</span><span class="c"> <span class="z">文档</span></span></span></div>
<div class="ln" style="top:673px"><span class="no">71</span><span class="code" style="left:70px"><span class="k">gateway</span><span class="p">:</span></span></div>
<div class="ln" style="top:695px"><span class="no">72</span><span class="code" style="left:86px"><span class="k">enabled</span><span class="p">: </span><span class="k">true</span></span></div>
<div class="ln" style="top:717px"><span class="no">73</span><span class="code" style="left:86px"><span class="k">routes</span><span class="p">:</span></span></div>
<div class="ln" style="top:739px"><span class="no">74</span><svg class="fa" width="10" height="12" viewBox="0 0 10 12" fill="none"><path d="M3 2.200L7 6 3 9.800" stroke="#888b90" stroke-width="1.100" stroke-linecap="round" stroke-linejoin="round"/></svg><span class="fb" style="left:102px;width:80px"></span><span class="code" style="left:102px"><span class="f">- &lt;3 keys&gt;</span></span></div>
<div class="ln" style="top:761px"><span class="no">77</span><svg class="fa" width="10" height="12" viewBox="0 0 10 12" fill="none"><path d="M3 2.200L7 6 3 9.800" stroke="#888b90" stroke-width="1.100" stroke-linecap="round" stroke-linejoin="round"/></svg><span class="fb" style="left:102px;width:80px"></span><span class="code" style="left:102px"><span class="f">- &lt;3 keys&gt;</span></span></div>
<div class="ln" style="top:783px"><span class="no">80</span><svg class="fa" width="10" height="12" viewBox="0 0 10 12" fill="none"><path d="M3 2.200L7 6 3 9.800" stroke="#888b90" stroke-width="1.100" stroke-linecap="round" stroke-linejoin="round"/></svg><span class="fb" style="left:102px;width:80px"></span><span class="code" style="left:102px"><span class="f">- &lt;3 keys&gt;</span></span></div>
<div class="ln" style="top:805px"><span class="no">83</span><span class="code" style="left:102px"><span class="p">- </span><span class="yk">name</span><span class="p">: demo-server</span></span></div>
<div class="ln" style="top:827px"><span class="no">84</span><span class="code" style="left:118px"><span class="yk">service-name</span><span class="p">: demo-server</span></span></div>
<div class="ln" style="top:849px"><span class="no">85</span><span class="code" style="left:118px"><span class="yk">url</span><span class="p">: /admin-api/demo/v3/api-docs</span></span></div>
<div class="ln" style="top:871px"><span class="no">86</span><span class="code" style="left:54px"></span></div>
 <div class="tabs"><div class="tab"><span style="position:absolute;left:8px;top:10.500px"><svg class="ic" style="overflow:visible" width="16" height="16" viewBox="0 0 16 16" fill="none"><path d="M15 2.600c-.8 1.800-2.500 2.600-5.500 2.800C5.500 5.600 1.200 6.800 1.200 10.200c0 2.400 1.800 4 4 4h5.800c2 0 4.400-3.200 4.400-7.200 0-2-.2-3.400-.4-4.400z" fill="#5b9f4d"/><path d="M2.700 15.400l2.700-2.800" stroke="#5b9f4d" stroke-width="1"/><path d="M17.300 11.500l-2.650 4.600h-5.300L6.700 11.500l2.650-4.600h5.300z" fill="#2b2b2b"/><path d="M16.250 11.500l-2.130 3.680H9.880L7.750 11.500l2.130-3.680h4.240z" fill="#a9b7c9"/><path d="M10.700 10.500a1.900 1.900 0 1 0 2.600 0M12 9.400v2.100" stroke="#2b2b2b" stroke-width=".9" fill="none"/></svg></span><span class="nm">application.yaml</span><svg style="position:absolute;left:135.500px;top:12.500px" width="12" height="12" viewBox="0 0 12 12"><path d="M2.700 2.700l6.600 6.600M9.300 2.700l-6.600 6.600" stroke="#8c8f94" stroke-width="1"/></svg></div></div>
</div>
<svg style="position:absolute;left:490px;top:386px" width="14" height="18" viewBox="0 0 14 18" fill="none"><path d="M7 1a5 5 0 0 0-3 9c.6.500 1 1.200 1 2h4c0-.8.400-1.500 1-2a5 5 0 0 0-3-9z" fill="#f2c55c"/><path d="M5 13.500h4M5.300 15.500h3.400" stroke="#f2c55c" stroke-width="1.200"/></svg>
<svg style="position:absolute;left:0;top:0" width="1314" height="885" viewBox="0 0 1314 885"><path d="M593.3 168.6C604.9 167.0 617.8 165.6 633.7 166.5" stroke="#f0280c" stroke-width="2.7" stroke-linecap="round" fill="none"/><path d="M671.3 190.5C681.5 188.9 693.1 187.7 707.2 188.6" stroke="#f0280c" stroke-width="2.7" stroke-linecap="round" fill="none"/><path d="M709.8 234.7C722.0 233.1 735.5 233.8 752.2 234.7" stroke="#f0280c" stroke-width="2.7" stroke-linecap="round" fill="none"/><path d="M773.8 276.5C785.0 274.9 797.4 275.9 812.7 276.8" stroke="#f0280c" stroke-width="2.7" stroke-linecap="round" fill="none"/><path d="M594.3 299.6C604.4 298.0 615.8 298.7 629.7 299.6" stroke="#f0280c" stroke-width="2.7" stroke-linecap="round" fill="none"/><path d="M669.8 320.0C679.3 318.4 690.1 319.4 703.2 320.3" stroke="#f0280c" stroke-width="2.7" stroke-linecap="round" fill="none"/><path d="M701.3 367.5C712.6 365.9 725.2 365.3 740.7 366.2" stroke="#f0280c" stroke-width="2.7" stroke-linecap="round" fill="none"/><path d="M757.3 411.0C768.0 409.4 780.0 409.1 794.7 410.0" stroke="#f0280c" stroke-width="2.7" stroke-linecap="round" fill="none"/><path d="M602.8 828.2C611.7 826.6 621.9 825.7 634.2 826.6" stroke="#f0280c" stroke-width="2.7" stroke-linecap="round" fill="none"/><path d="M660.8 848.1C670.8 846.5 682.0 845.7 695.7 846.6" stroke="#f0280c" stroke-width="2.7" stroke-linecap="round" fill="none"/><path d="M672.8 872.5C681.2 870.9 691.0 872.0 702.7 872.9" stroke="#f0280c" stroke-width="2.7" stroke-linecap="round" fill="none"/></svg>
<div style="position:absolute;left:0;top:0;width:1314px;height:1px;background:rgba(0,0,0,.13)"></div>
<div class="note">注意，图中和 demo 相关的字段</div>
</body></html>
